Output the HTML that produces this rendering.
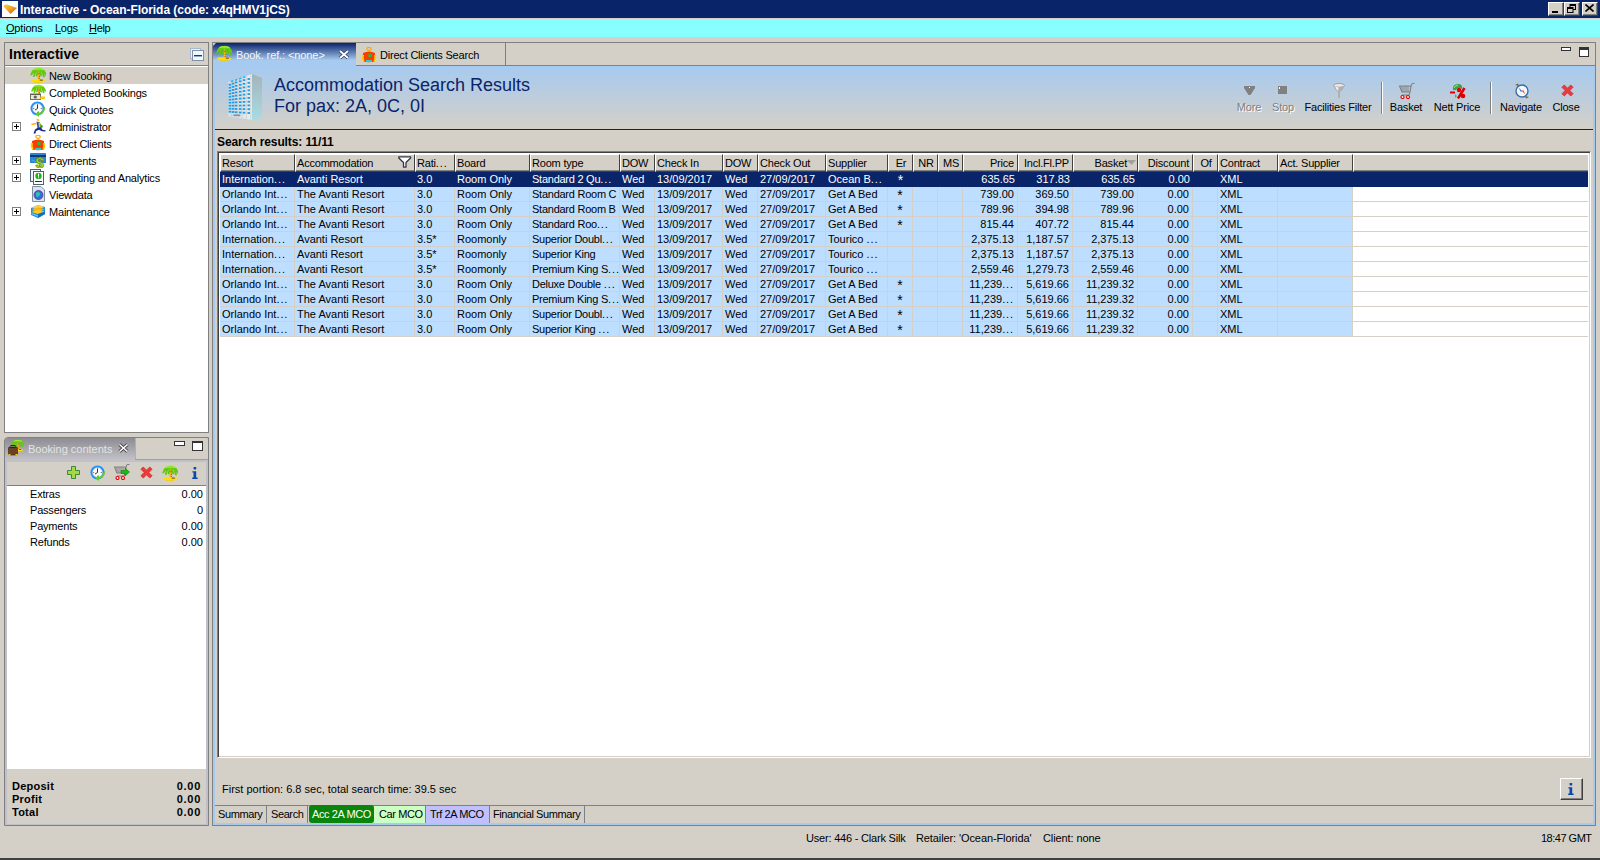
<!DOCTYPE html><html><head><meta charset="utf-8"><style>
*{box-sizing:border-box;margin:0;padding:0}
html,body{width:1600px;height:860px;overflow:hidden}
body{position:relative;background:#d4d0c8;font-family:"Liberation Sans",sans-serif;font-size:11px;color:#000;line-height:15px}
.a{position:absolute}
.t{position:absolute;white-space:nowrap}
.u{text-decoration:underline}
.wbtn{position:absolute;top:2px;width:16px;height:14px;background:#d4d0c8;border-top:1px solid #fff;border-left:1px solid #fff;border-right:1px solid #404040;border-bottom:1px solid #404040;box-shadow:inset -1px -1px 0 #808080}
.hc{position:absolute;top:154px;height:18px;background:#d4d0c8;border-top:1px solid #fff;border-left:1px solid #fff;border-right:1px solid #404040;border-bottom:1px solid #404040;box-shadow:inset 0 -1px 0 #808080;padding:1px 0 0 1px;line-height:15px;letter-spacing:-0.2px;white-space:nowrap;overflow:hidden}
.row{position:absolute;left:220px;width:1368px;height:15px;background:#fff;border-bottom:1px solid #d4d0c8}
.c{position:absolute;top:0;height:15px;white-space:nowrap;overflow:hidden;padding:0 2px;line-height:15px}
.cb{background:#bddeff;border-right:1px solid #d4d0c8;height:14px}
.sel .c{color:#fff}
.sel{background:#0a246a;border-bottom:none}
.sel .cb{background:transparent;border-right:none;height:15px}
.r{text-align:right;padding:0 3px 0 2px}
.ce{text-align:center}
</style></head><body>
<div class="a" style="left:0;top:0;width:1600px;height:18px;background:#0a246a"></div>
<div class="a" style="left:2px;top:1px;width:16px;height:16px;background:#fff"></div>
<div class="t" style="left:20px;top:2px;font-weight:bold;font-size:12px;color:#fff;line-height:16px;letter-spacing:-0.05px">Interactive - Ocean-Florida (code: x4qHMV1jCS)</div>
<svg class="a" style="left:2px;top:3px" width="16" height="12" viewBox="0 0 16 12"><defs><linearGradient id="ai" x1="0" y1="0" x2="1" y2="1"><stop offset="0" stop-color="#ffd040"/><stop offset="0.5" stop-color="#f0a020"/><stop offset="1" stop-color="#c84810"/></linearGradient></defs><path d="M1.5 3.5 Q2 1 5 1.5 L15 5 L8.5 11 Z" fill="url(#ai)"/></svg>
<div class="wbtn" style="left:1548px"></div>
<div class="wbtn" style="left:1564px"></div>
<div class="wbtn" style="left:1582px"></div>
<div class="a" style="left:1552px;top:11px;width:6px;height:2px;background:#000"></div>
<svg class="a" style="left:1567px;top:4px" width="9" height="9" viewBox="0 0 9 9"><rect x="3" y="0.5" width="5.5" height="5" fill="none" stroke="#000"/><rect x="3" y="0" width="6" height="2" fill="#000"/><rect x="0.5" y="3.5" width="5.5" height="5" fill="#d4d0c8" stroke="#000"/><rect x="0" y="3" width="6" height="2" fill="#000"/></svg>
<svg class="a" style="left:1585px;top:4px" width="9" height="8" viewBox="0 0 9 8"><path d="M0.5 0.5 L8.5 7.5 M8.5 0.5 L0.5 7.5" stroke="#000" stroke-width="1.6"/></svg>
<div class="a" style="left:0;top:19px;width:1600px;height:18px;background:#88ffff"></div>
<div class="t" style="left:6px;top:21px;letter-spacing:-0.2px"><span class="u">O</span>ptions</div>
<div class="t" style="left:55px;top:21px;letter-spacing:-0.3px"><span class="u">L</span>ogs</div>
<div class="t" style="left:89px;top:21px;letter-spacing:-0.3px"><span class="u">H</span>elp</div>
<div class="a" style="left:4px;top:42px;width:205px;height:391px;border:1px solid #808080;background:#fff"></div>
<div class="a" style="left:5px;top:43px;width:203px;height:22px;background:#d4d0c8"></div>
<div class="a" style="left:5px;top:65px;width:203px;height:1px;background:#808080"></div>
<div class="t" style="left:9px;top:46px;font-weight:bold;font-size:14px;line-height:16px">Interactive</div>
<div class="a" style="left:5px;top:67px;width:203px;height:17px;background:#d4d0c8"></div>
<svg class="a" style="left:190px;top:48px" width="14" height="13" viewBox="0 0 14 13"><rect x="0.5" y="0.5" width="10" height="10" fill="#e8f4ff" stroke="#a8b8d0"/><rect x="2.5" y="2.5" width="11" height="10" fill="#f0f8ff" stroke="#8090a8"/><rect x="4" y="7" width="8" height="1.4" fill="#10407a"/></svg>
<div class="t" style="left:49px;top:69px;letter-spacing:-0.2px">New Booking</div>
<svg class="a" style="left:30px;top:67px" width="16" height="16" viewBox="0 0 16 16"><path d="M7.6 3.5 Q9.8 8 8.8 13" stroke="#f2b418" stroke-width="2.4" fill="none"/><path d="M8.6 6.2 l1 0.8 M9.2 9 l0.6 0.7 M8.9 11.4 l0.7 0.6" stroke="#b04a10" stroke-width="1.2" fill="none"/><path d="M0.5 14 Q1 12.4 4 12.2 L12 12.2 Q15.2 12.6 15 14 Q14 15.9 8 15.7 Q2 15.9 0.5 14Z" fill="#ffde00"/><path d="M3 15 Q8 15.8 13 15 Q12 15.9 8 15.8 Q4 15.9 3 15Z" fill="#e8b800"/><path d="M9.8 12.6 h3 v1 h-3z" fill="#5a3a10"/><path d="M0.8 6.2 Q2.5 1 8.5 0.8 Q14.5 1 16 6.8 Q12.5 4 8.5 4 Q4.5 4 0.8 6.2Z" fill="#6ed214"/><path d="M4 4 L1.2 7.5 M5.5 4.2 L3.8 9 M7.6 4.5 L6.6 8.5 M10 4.4 L11.2 8.4 M12.2 4.2 L14 9.4 M13.6 3.8 L15.8 7.6" stroke="#62c810" stroke-width="1.9" stroke-linecap="round" fill="none"/><path d="M3.5 2.6 Q6 1.5 8.5 2.2 Q11 1.5 13.5 2.8" stroke="#a4ee3c" stroke-width="1.2" fill="none"/></svg>
<div class="t" style="left:49px;top:86px;letter-spacing:-0.2px">Completed Bookings</div>
<svg class="a" style="left:30px;top:84px" width="16" height="16" viewBox="0 0 16 16"><g transform="translate(1,0) scale(0.9)"><path d="M7.6 3.5 Q9.8 8 8.8 13" stroke="#f2b418" stroke-width="2.4" fill="none"/><path d="M8.6 6.2 l1 0.8 M9.2 9 l0.6 0.7 M8.9 11.4 l0.7 0.6" stroke="#b04a10" stroke-width="1.2" fill="none"/><path d="M0.8 6.2 Q2.5 1 8.5 0.8 Q14.5 1 16 6.8 Q12.5 4 8.5 4 Q4.5 4 0.8 6.2Z" fill="#6ed214"/><path d="M4 4 L1.2 7.5 M5.5 4.2 L3.8 9 M7.6 4.5 L6.6 8.5 M10 4.4 L11.2 8.4 M12.2 4.2 L14 9.4 M13.6 3.8 L15.8 7.6" stroke="#62c810" stroke-width="1.9" stroke-linecap="round" fill="none"/><path d="M3.5 2.6 Q6 1.5 8.5 2.2 Q11 1.5 13.5 2.8" stroke="#a4ee3c" stroke-width="1.2" fill="none"/></g><rect x="0.5" y="10" width="10" height="5.5" fill="#e8e8d8" stroke="#707060"/><rect x="0.5" y="10" width="10" height="1" fill="#606050"/><circle cx="5.3" cy="13" r="1.6" fill="#606060"/><path d="M10.5 12.5 h4.5 v2.5 h-5z" fill="#ffc800"/></svg>
<div class="t" style="left:49px;top:103px;letter-spacing:-0.2px">Quick Quotes</div>
<svg class="a" style="left:30px;top:101px" width="16" height="16" viewBox="0 0 16 16"><circle cx="7.5" cy="7.5" r="7" fill="#1e90ff"/><circle cx="7.5" cy="7.5" r="5" fill="#fafafa" stroke="#a0b0c0" stroke-width="0.6"/><path d="M7.5 3.2 v1 M7.5 10.8 v1 M3.2 7.5 h1 M10.8 7.5 h1" stroke="#404040" stroke-width="0.8"/><path d="M7.5 4 V7.5 L5 9" stroke="#333" stroke-width="1" fill="none"/><path d="M15 6 Q15.5 12 9 14 L9 16 L5.5 13 L9 10 L9 12 Q13 11 14 6Z" fill="#66cc22"/></svg>
<div class="t" style="left:49px;top:120px;letter-spacing:-0.2px">Administrator</div>
<svg class="a" style="left:30px;top:118px" width="16" height="16" viewBox="0 0 16 16"><path d="M6 1 L8.5 0.8 L9.5 2.5 L8 3.5Z" fill="#ffc020"/><path d="M6.5 3.5 L10 4.5 L10.5 9.5 L7.5 10Z" fill="#3050b0"/><path d="M8.5 4.5 L10.5 5 L11.5 9 L9 9.5Z" fill="#ffc020"/><path d="M10.5 6 L13 8 L11.5 11 L10 10Z" fill="#30a030"/><path d="M1.5 6.5 L6.5 5.5" stroke="#ffb000" stroke-width="1.4"/><path d="M8 9.5 L5 11.5 L4 14 L3.5 15.5 L5.5 15.5 L6 13 L9 11.8 L12 13.2 L15.5 13.5 L15.5 12.3 L12.5 11.8 L10.5 9.5Z" fill="#1a2a8a"/></svg>
<div class="a" style="left:12px;top:122px;width:9px;height:9px;border:1px solid #808080;background:#fff"></div>
<div class="a" style="left:14px;top:126px;width:5px;height:1px;background:#000"></div>
<div class="a" style="left:16px;top:124px;width:1px;height:5px;background:#000"></div>
<div class="t" style="left:49px;top:137px;letter-spacing:-0.2px">Direct Clients</div>
<svg class="a" style="left:30px;top:135px" width="16" height="16" viewBox="0 0 16 16"><ellipse cx="8" cy="1.8" rx="2.2" ry="1.5" fill="none" stroke="#ffaa00" stroke-width="1.2"/><path d="M2 6 Q8 3 14 6 L14 14.5 Q8 16 2 14.5Z" fill="#ff3a00"/><path d="M1 8 Q0 12 2.5 15 L3.5 14 Q2 11 3 8Z M15 8 Q16 12 13.5 15 L12.5 14 Q14 11 13 8Z" fill="#ffd000"/><rect x="7.5" y="7" width="3" height="3" fill="#20c040"/><rect x="5" y="13" width="6" height="2" fill="#20d0d0"/></svg>
<div class="t" style="left:49px;top:154px;letter-spacing:-0.2px">Payments</div>
<svg class="a" style="left:30px;top:152px" width="16" height="16" viewBox="0 0 16 16"><rect x="0" y="1" width="16" height="10" rx="0.5" fill="#2a86d8"/><rect x="0" y="3" width="16" height="2" fill="#0a3a70"/><path d="M2 8 L9 11" stroke="#60b0f0" stroke-width="0.8"/><text x="5.5" y="15.5" font-family="Liberation Sans" font-weight="bold" font-size="15" fill="#b8e020" stroke="#5a8a10" stroke-width="0.6">$</text></svg>
<div class="a" style="left:12px;top:156px;width:9px;height:9px;border:1px solid #808080;background:#fff"></div>
<div class="a" style="left:14px;top:160px;width:5px;height:1px;background:#000"></div>
<div class="a" style="left:16px;top:158px;width:1px;height:5px;background:#000"></div>
<div class="t" style="left:49px;top:171px;letter-spacing:-0.2px">Reporting and Analytics</div>
<svg class="a" style="left:30px;top:169px" width="16" height="16" viewBox="0 0 16 16"><rect x="0.5" y="0.5" width="10" height="12" fill="#f0f4f8" stroke="#506070"/><rect x="3.5" y="2.5" width="10" height="13" fill="#fff" stroke="#506070"/><circle cx="8.5" cy="7" r="3.2" fill="#20b020"/><rect x="8" y="4.6" width="1" height="3" fill="#fff"/><rect x="8" y="8.3" width="1" height="1" fill="#fff"/><rect x="5" y="12" width="7" height="1" fill="#303030"/></svg>
<div class="a" style="left:12px;top:173px;width:9px;height:9px;border:1px solid #808080;background:#fff"></div>
<div class="a" style="left:14px;top:177px;width:5px;height:1px;background:#000"></div>
<div class="a" style="left:16px;top:175px;width:1px;height:5px;background:#000"></div>
<div class="t" style="left:49px;top:188px;letter-spacing:-0.2px">Viewdata</div>
<svg class="a" style="left:30px;top:186px" width="16" height="16" viewBox="0 0 16 16"><path d="M2.5 0.5 H11 L14.5 4 V15.5 H2.5Z" fill="#d8e4f0" stroke="#8090a0"/><circle cx="8.5" cy="9" r="4.5" fill="#3070d0"/><path d="M6 7 Q8 5 10 7 Q11 9 9 10 Q7 12 6 10Z" fill="#30c0b0"/><circle cx="8.5" cy="9" r="4.5" fill="none" stroke="#6030a0" stroke-width="0.8"/></svg>
<div class="t" style="left:49px;top:205px;letter-spacing:-0.2px">Maintenance</div>
<svg class="a" style="left:30px;top:203px" width="16" height="16" viewBox="0 0 16 16"><path d="M1 5 L8 2 L15 4 L15 11 L8 15 L1 12Z" fill="#2090e0"/><path d="M1.5 5 L8 2 L14.5 4 L8 6.5Z" fill="#ffd040"/><path d="M1.5 7 L8 4.2 L14.5 6.2 L8 9Z" fill="#ffb000"/><path d="M1.5 9 L8 6.4 L14.5 8.4 L8 11Z" fill="#ffc828"/><path d="M8 11 L15 8.5 L15 11 L8 15Z" fill="#1070c0"/><path d="M1.5 10 L8 12.5 L8 13.5 L1.5 11Z" fill="#70d8ff"/></svg>
<div class="a" style="left:12px;top:207px;width:9px;height:9px;border:1px solid #808080;background:#fff"></div>
<div class="a" style="left:14px;top:211px;width:5px;height:1px;background:#000"></div>
<div class="a" style="left:16px;top:209px;width:1px;height:5px;background:#000"></div>
<div class="a" style="left:4px;top:437px;width:205px;height:389px;border:1px solid #808080;border-top-left-radius:4px;background:#c0c0c8"></div>
<div class="a" style="left:5px;top:438px;width:130px;height:23px;border-top-left-radius:3px;background:linear-gradient(#8c8c92,#c4c4ca)"></div>
<div class="a" style="left:135px;top:438px;width:73px;height:21px;background:#d4d0c8;border-left:1px solid #b0b0b0;border-top-right-radius:4px"></div>
<div class="a" style="left:135px;top:459px;width:73px;height:1px;background:#a0a0a0"></div>
<svg class="a" style="left:8px;top:440px" width="16" height="16" viewBox="0 0 16 16"><g transform="translate(3,-1) scale(0.8)"><path d="M7.6 3.5 Q9.8 8 8.8 13" stroke="#f2b418" stroke-width="2.4" fill="none"/><path d="M8.6 6.2 l1 0.8 M9.2 9 l0.6 0.7 M8.9 11.4 l0.7 0.6" stroke="#b04a10" stroke-width="1.2" fill="none"/><path d="M0.5 14 Q1 12.4 4 12.2 L12 12.2 Q15.2 12.6 15 14 Q14 15.9 8 15.7 Q2 15.9 0.5 14Z" fill="#ffde00"/><path d="M3 15 Q8 15.8 13 15 Q12 15.9 8 15.8 Q4 15.9 3 15Z" fill="#e8b800"/><path d="M9.8 12.6 h3 v1 h-3z" fill="#5a3a10"/><path d="M0.8 6.2 Q2.5 1 8.5 0.8 Q14.5 1 16 6.8 Q12.5 4 8.5 4 Q4.5 4 0.8 6.2Z" fill="#6ed214"/><path d="M4 4 L1.2 7.5 M5.5 4.2 L3.8 9 M7.6 4.5 L6.6 8.5 M10 4.4 L11.2 8.4 M12.2 4.2 L14 9.4 M13.6 3.8 L15.8 7.6" stroke="#62c810" stroke-width="1.9" stroke-linecap="round" fill="none"/><path d="M3.5 2.6 Q6 1.5 8.5 2.2 Q11 1.5 13.5 2.8" stroke="#a4ee3c" stroke-width="1.2" fill="none"/></g><rect x="0.5" y="7" width="9" height="8" rx="1" fill="#6b4226" stroke="#3a2010" stroke-width="0.6"/><rect x="3" y="5.5" width="4" height="2" fill="none" stroke="#3a2010"/><rect x="0.5" y="14" width="2" height="1.5" fill="#ffd000"/><rect x="7.5" y="14" width="2" height="1.5" fill="#ffd000"/></svg>
<div class="t" style="left:28px;top:442px;color:#e4e4e4">Booking contents</div>
<svg class="a" style="left:118px;top:443px" width="11" height="10" viewBox="0 0 11 10"><path d="M1.5 1.5 L9.5 8.5 M9.5 1.5 L1.5 8.5" stroke="#404040" stroke-width="3.2"/><path d="M1.5 1.5 L9.5 8.5 M9.5 1.5 L1.5 8.5" stroke="#fff" stroke-width="1.6"/></svg>
<div class="a" style="left:174px;top:441px;width:11px;height:5px;border:1px solid #333;background:#fff"></div>
<div class="a" style="left:192px;top:441px;width:11px;height:10px;border:1px solid #333;border-top-width:2px;background:#fff"></div>
<div class="a" style="left:7px;top:462px;width:199px;height:24px;background:#d4d0c8;border-bottom:1px solid #808080"></div>
<svg class="a" style="left:66px;top:465px" width="16" height="16" viewBox="0 0 16 16"><path d="M5.5 1.5 H9.5 V5.5 H13.5 V9.5 H9.5 V13.5 H5.5 V9.5 H1.5 V5.5 H5.5Z" fill="#a8d840" stroke="#3a8a40" stroke-width="1"/></svg>
<svg class="a" style="left:90px;top:465px" width="16" height="16" viewBox="0 0 16 16"><circle cx="7.5" cy="7.5" r="7" fill="#1e90ff"/><circle cx="7.5" cy="7.5" r="5" fill="#fafafa" stroke="#a0b0c0" stroke-width="0.6"/><path d="M7.5 3.2 v1 M7.5 10.8 v1 M3.2 7.5 h1 M10.8 7.5 h1" stroke="#404040" stroke-width="0.8"/><path d="M7.5 4 V7.5 L5 9" stroke="#333" stroke-width="1" fill="none"/><path d="M15 6 Q15.5 12 9 14 L9 16 L5.5 13 L9 10 L9 12 Q13 11 14 6Z" fill="#66cc22"/></svg>
<svg class="a" style="left:114px;top:464px" width="16" height="16" viewBox="0 0 16 16"><path d="M0.5 3 H12 L11 9 H3 Z" fill="none" stroke="#808080" stroke-width="1.2"/><path d="M3 3 V9 M5 3 V9 M7 3 V9 M9 3 V9" stroke="#808080" stroke-width="1"/><path d="M12 3 L13 0.5 H15.5" stroke="#808080" stroke-width="1" fill="none"/><path d="M11 9 L10 12 H3" stroke="#808080" stroke-width="1" fill="none"/><circle cx="3.5" cy="14" r="1.5" fill="#fff" stroke="#ee0000" stroke-width="1.2"/><circle cx="9" cy="14" r="1.5" fill="#fff" stroke="#ee0000" stroke-width="1.2"/><path d="M7 6.5 H11 V4 L15.5 8 L11 12 V9.5 H7Z" fill="#10c010" stroke="#087008" stroke-width="0.5"/></svg>
<svg class="a" style="left:140px;top:466px" width="13" height="13" viewBox="0 0 14 14"><path d="M1 3.5 L3.5 1 L7 4.5 L10.5 1 L13 3.5 L9.5 7 L13 10.5 L10.5 13 L7 9.5 L3.5 13 L1 10.5 L4.5 7Z" fill="#ee3a3a" stroke="#c82020" stroke-width="0.7" stroke-linejoin="round"/></svg>
<svg class="a" style="left:162px;top:465px" width="16" height="16" viewBox="0 0 16 16"><path d="M7.6 3.5 Q9.8 8 8.8 13" stroke="#f2b418" stroke-width="2.4" fill="none"/><path d="M8.6 6.2 l1 0.8 M9.2 9 l0.6 0.7 M8.9 11.4 l0.7 0.6" stroke="#b04a10" stroke-width="1.2" fill="none"/><path d="M0.5 14 Q1 12.4 4 12.2 L12 12.2 Q15.2 12.6 15 14 Q14 15.9 8 15.7 Q2 15.9 0.5 14Z" fill="#ffde00"/><path d="M3 15 Q8 15.8 13 15 Q12 15.9 8 15.8 Q4 15.9 3 15Z" fill="#e8b800"/><path d="M9.8 12.6 h3 v1 h-3z" fill="#5a3a10"/><path d="M0.8 6.2 Q2.5 1 8.5 0.8 Q14.5 1 16 6.8 Q12.5 4 8.5 4 Q4.5 4 0.8 6.2Z" fill="#6ed214"/><path d="M4 4 L1.2 7.5 M5.5 4.2 L3.8 9 M7.6 4.5 L6.6 8.5 M10 4.4 L11.2 8.4 M12.2 4.2 L14 9.4 M13.6 3.8 L15.8 7.6" stroke="#62c810" stroke-width="1.9" stroke-linecap="round" fill="none"/><path d="M3.5 2.6 Q6 1.5 8.5 2.2 Q11 1.5 13.5 2.8" stroke="#a4ee3c" stroke-width="1.2" fill="none"/></svg>
<svg class="a" style="left:192px;top:467px" width="6" height="12" viewBox="0 0 6 12"><rect x="1.6" y="0" width="2.6" height="2.4" rx="0.6" fill="#0848a8"/><path d="M0.4 4.2 H4.2 V10.6 H5.6 V12 H0.2 V10.6 H1.5 V5.6 H0.4Z" fill="#0848a8"/></svg>
<div class="a" style="left:7px;top:486px;width:199px;height:283px;background:#fff"></div>
<div class="t" style="left:30px;top:487px;letter-spacing:-0.2px">Extras</div>
<div class="t" style="left:120px;width:83px;text-align:right;top:487px">0.00</div>
<div class="t" style="left:30px;top:503px;letter-spacing:-0.2px">Passengers</div>
<div class="t" style="left:120px;width:83px;text-align:right;top:503px">0</div>
<div class="t" style="left:30px;top:519px;letter-spacing:-0.2px">Payments</div>
<div class="t" style="left:120px;width:83px;text-align:right;top:519px">0.00</div>
<div class="t" style="left:30px;top:535px;letter-spacing:-0.2px">Refunds</div>
<div class="t" style="left:120px;width:83px;text-align:right;top:535px">0.00</div>
<div class="a" style="left:7px;top:769px;width:199px;height:55px;background:#d4d0c8"></div>
<div class="t" style="left:12px;top:779px;font-weight:bold;letter-spacing:0.25px">Deposit</div>
<div class="t" style="left:120px;width:81px;text-align:right;top:779px;font-weight:bold;letter-spacing:0.7px">0.00</div>
<div class="t" style="left:12px;top:792px;font-weight:bold;letter-spacing:0.25px">Profit</div>
<div class="t" style="left:120px;width:81px;text-align:right;top:792px;font-weight:bold;letter-spacing:0.7px">0.00</div>
<div class="t" style="left:12px;top:805px;font-weight:bold;letter-spacing:0.25px">Total</div>
<div class="t" style="left:120px;width:81px;text-align:right;top:805px;font-weight:bold;letter-spacing:0.7px">0.00</div>
<div class="a" style="left:212px;top:42px;width:1384px;height:784px;border:1px solid #808080;background:#d4d0c8"></div>
<div class="a" style="left:213px;top:66px;width:1382px;height:759px;border:2px solid #a6caf0;border-top:none"></div>
<div class="a" style="left:356px;top:65px;width:1239px;height:1px;background:#808080"></div>
<div class="a" style="left:213px;top:43px;width:143px;height:23px;background:linear-gradient(#0a246a,#a6caf0 75%,#a6caf0);clip-path:polygon(3px 0,100% 0,100% 100%,0 100%,0 3px)"></div>
<div class="t" style="left:236px;top:48px;color:#f4f6fa;letter-spacing:-0.1px">Book. ref.: &lt;none&gt;</div>
<svg class="a" style="left:216px;top:45px" width="16" height="16" viewBox="0 0 16 16"><path d="M7.6 3.5 Q9.8 8 8.8 13" stroke="#f2b418" stroke-width="2.4" fill="none"/><path d="M8.6 6.2 l1 0.8 M9.2 9 l0.6 0.7 M8.9 11.4 l0.7 0.6" stroke="#b04a10" stroke-width="1.2" fill="none"/><path d="M0.5 14 Q1 12.4 4 12.2 L12 12.2 Q15.2 12.6 15 14 Q14 15.9 8 15.7 Q2 15.9 0.5 14Z" fill="#ffde00"/><path d="M3 15 Q8 15.8 13 15 Q12 15.9 8 15.8 Q4 15.9 3 15Z" fill="#e8b800"/><path d="M9.8 12.6 h3 v1 h-3z" fill="#5a3a10"/><path d="M0.8 6.2 Q2.5 1 8.5 0.8 Q14.5 1 16 6.8 Q12.5 4 8.5 4 Q4.5 4 0.8 6.2Z" fill="#6ed214"/><path d="M4 4 L1.2 7.5 M5.5 4.2 L3.8 9 M7.6 4.5 L6.6 8.5 M10 4.4 L11.2 8.4 M12.2 4.2 L14 9.4 M13.6 3.8 L15.8 7.6" stroke="#62c810" stroke-width="1.9" stroke-linecap="round" fill="none"/><path d="M3.5 2.6 Q6 1.5 8.5 2.2 Q11 1.5 13.5 2.8" stroke="#a4ee3c" stroke-width="1.2" fill="none"/></svg>
<svg class="a" style="left:338px;top:49px" width="12" height="11" viewBox="0 0 12 11"><path d="M2 2 L10 9 M10 2 L2 9" stroke="#303a60" stroke-width="3.4"/><path d="M2 2 L10 9 M10 2 L2 9" stroke="#fff" stroke-width="1.8"/></svg>
<svg class="a" style="left:361px;top:47px" width="16" height="16" viewBox="0 0 16 16"><ellipse cx="8" cy="1.8" rx="2.2" ry="1.5" fill="none" stroke="#ffaa00" stroke-width="1.2"/><path d="M2 6 Q8 3 14 6 L14 14.5 Q8 16 2 14.5Z" fill="#ff3a00"/><path d="M1 8 Q0 12 2.5 15 L3.5 14 Q2 11 3 8Z M15 8 Q16 12 13.5 15 L12.5 14 Q14 11 13 8Z" fill="#ffd000"/><rect x="7.5" y="7" width="3" height="3" fill="#20c040"/><rect x="5" y="13" width="6" height="2" fill="#20d0d0"/></svg>
<div class="a" style="left:1561px;top:47px;width:10px;height:4px;border:1px solid #333;background:#fff"></div>
<div class="a" style="left:1579px;top:47px;width:10px;height:10px;border:1px solid #333;border-top-width:3px;background:#fff"></div>
<div class="a" style="left:505px;top:43px;width:1px;height:22px;background:#808080"></div>
<div class="t" style="left:380px;top:48px;letter-spacing:-0.2px">Direct Clients Search</div>
<div class="a" style="left:215px;top:66px;width:1378px;height:63px;background:linear-gradient(#a6caf0,#d4d0c8)"></div>
<div class="a" style="left:215px;top:129px;width:1378px;height:1px;background:#0a246a"></div>
<svg class="a" style="left:228px;top:74px" width="35" height="47" viewBox="0 0 35 47"><defs><linearGradient id="bs" x1="0" y1="0" x2="0" y2="1"><stop offset="0" stop-color="#a4b4b8"/><stop offset="1" stop-color="#a8dce4"/></linearGradient><linearGradient id="bf" x1="0" y1="0" x2="1" y2="0"><stop offset="0" stop-color="#d4dce0"/><stop offset="1" stop-color="#e8eef0"/></linearGradient></defs><path d="M24 0 L34 4 L34 43.5 L24 46Z" fill="url(#bs)"/><path d="M0 8 L24 0 L24 46 L0 42.5Z" fill="url(#bf)"/><path d="M3.6 6.8 V43.0" stroke="#c4ccd0" stroke-width="0.7"/><path d="M6.8 5.8 V43.5" stroke="#c4ccd0" stroke-width="0.7"/><path d="M10.2 4.6 V44.0" stroke="#c4ccd0" stroke-width="0.7"/><path d="M14.1 3.3 V44.5" stroke="#c4ccd0" stroke-width="0.7"/><path d="M18.4 1.9 V45.2" stroke="#c4ccd0" stroke-width="0.7"/><path d="M22.8 0.5 V45.8" stroke="#c4ccd0" stroke-width="0.7"/><rect x="0.6" y="9.8" width="2.5" height="1.8" fill="#1e9ae8"/><rect x="0.6" y="12.8" width="2.5" height="1.8" fill="#1e9ae8"/><rect x="0.6" y="15.8" width="2.5" height="1.8" fill="#1e9ae8"/><rect x="0.6" y="18.8" width="2.5" height="1.8" fill="#1e9ae8"/><rect x="0.6" y="21.8" width="2.5" height="1.8" fill="#1e9ae8"/><rect x="0.6" y="24.8" width="2.5" height="1.8" fill="#1e9ae8"/><rect x="0.6" y="27.8" width="2.5" height="1.8" fill="#1e9ae8"/><rect x="0.6" y="30.8" width="2.5" height="1.8" fill="#1e9ae8"/><rect x="0.6" y="33.8" width="2.5" height="1.8" fill="#1e9ae8"/><rect x="0.6" y="36.8" width="2.5" height="1.8" fill="#1e9ae8"/><rect x="3.8" y="8.7" width="2.5" height="1.8" fill="#1e9ae8"/><rect x="3.8" y="11.9" width="2.5" height="1.8" fill="#1e9ae8"/><rect x="3.8" y="15.0" width="2.5" height="1.8" fill="#1e9ae8"/><rect x="3.8" y="18.2" width="2.5" height="1.8" fill="#1e9ae8"/><rect x="3.8" y="21.3" width="2.5" height="1.8" fill="#1e9ae8"/><rect x="3.8" y="24.5" width="2.5" height="1.8" fill="#1e9ae8"/><rect x="3.8" y="27.6" width="2.5" height="1.8" fill="#1e9ae8"/><rect x="3.8" y="30.8" width="2.5" height="1.8" fill="#1e9ae8"/><rect x="3.8" y="33.9" width="2.5" height="1.8" fill="#1e9ae8"/><rect x="3.8" y="37.1" width="2.5" height="1.8" fill="#1e9ae8"/><rect x="6.9" y="7.5" width="2.5" height="1.8" fill="#1e9ae8"/><rect x="6.9" y="10.9" width="2.5" height="1.8" fill="#1e9ae8"/><rect x="6.9" y="14.2" width="2.5" height="1.8" fill="#1e9ae8"/><rect x="6.9" y="17.5" width="2.5" height="1.8" fill="#1e9ae8"/><rect x="6.9" y="20.8" width="2.5" height="1.8" fill="#1e9ae8"/><rect x="6.9" y="24.1" width="2.5" height="1.8" fill="#1e9ae8"/><rect x="6.9" y="27.4" width="2.5" height="1.8" fill="#1e9ae8"/><rect x="6.9" y="30.7" width="2.5" height="1.8" fill="#1e9ae8"/><rect x="6.9" y="34.0" width="2.5" height="1.8" fill="#1e9ae8"/><rect x="6.9" y="37.3" width="2.5" height="1.8" fill="#1e9ae8"/><rect x="11.0" y="6.4" width="2.5" height="1.8" fill="#1e9ae8"/><rect x="11.0" y="9.9" width="2.5" height="1.8" fill="#1e9ae8"/><rect x="11.0" y="13.3" width="2.5" height="1.8" fill="#1e9ae8"/><rect x="11.0" y="16.8" width="2.5" height="1.8" fill="#1e9ae8"/><rect x="11.0" y="20.3" width="2.5" height="1.8" fill="#1e9ae8"/><rect x="11.0" y="23.7" width="2.5" height="1.8" fill="#1e9ae8"/><rect x="11.0" y="27.2" width="2.5" height="1.8" fill="#1e9ae8"/><rect x="11.0" y="30.7" width="2.5" height="1.8" fill="#1e9ae8"/><rect x="11.0" y="34.1" width="2.5" height="1.8" fill="#1e9ae8"/><rect x="11.0" y="37.6" width="2.5" height="1.8" fill="#1e9ae8"/><rect x="14.8" y="5.2" width="2.5" height="1.8" fill="#1e9ae8"/><rect x="14.8" y="8.9" width="2.5" height="1.8" fill="#1e9ae8"/><rect x="14.8" y="12.5" width="2.5" height="1.8" fill="#1e9ae8"/><rect x="14.8" y="16.1" width="2.5" height="1.8" fill="#1e9ae8"/><rect x="14.8" y="19.7" width="2.5" height="1.8" fill="#1e9ae8"/><rect x="14.8" y="23.4" width="2.5" height="1.8" fill="#1e9ae8"/><rect x="14.8" y="27.0" width="2.5" height="1.8" fill="#1e9ae8"/><rect x="14.8" y="30.6" width="2.5" height="1.8" fill="#1e9ae8"/><rect x="14.8" y="34.2" width="2.5" height="1.8" fill="#1e9ae8"/><rect x="14.8" y="37.8" width="2.5" height="1.8" fill="#1e9ae8"/><rect x="19.5" y="4.1" width="2.5" height="1.8" fill="#1e9ae8"/><rect x="19.5" y="7.9" width="2.5" height="1.8" fill="#1e9ae8"/><rect x="19.5" y="11.7" width="2.5" height="1.8" fill="#1e9ae8"/><rect x="19.5" y="15.4" width="2.5" height="1.8" fill="#1e9ae8"/><rect x="19.5" y="19.2" width="2.5" height="1.8" fill="#1e9ae8"/><rect x="19.5" y="23.0" width="2.5" height="1.8" fill="#1e9ae8"/><rect x="19.5" y="26.8" width="2.5" height="1.8" fill="#1e9ae8"/><rect x="19.5" y="30.5" width="2.5" height="1.8" fill="#1e9ae8"/><rect x="19.5" y="34.3" width="2.5" height="1.8" fill="#1e9ae8"/><rect x="19.5" y="38.1" width="2.5" height="1.8" fill="#1e9ae8"/><path d="M3 7.5 L5.5 6.7 M7 6.2 L9.5 5.4 M11 4.9 L13.5 4.1 M15 3.6 L17.5 2.8" stroke="#20b4f4" stroke-width="1.6"/><path d="M5 40.8 Q9 39.8 12.5 40.8 L12 42.3 L5.5 42Z" fill="#8a9298"/></svg>
<div class="t" style="left:274px;top:75px;font-size:18px;line-height:21px;color:#0a246a">Accommodation Search Results</div>
<div class="t" style="left:274px;top:96px;font-size:18px;line-height:21px;color:#0a246a">For pax: 2A, 0C, 0I</div>
<div class="t" style="left:1189px;width:120px;text-align:center;top:100px;color:#808080;text-shadow:1px 1px 0 #fff;letter-spacing:-0.2px">More</div>
<div class="t" style="left:1223px;width:120px;text-align:center;top:100px;color:#808080;text-shadow:1px 1px 0 #fff;letter-spacing:-0.2px">Stop</div>
<div class="t" style="left:1278px;width:120px;text-align:center;top:100px;color:#000;letter-spacing:-0.2px">Facilities Filter</div>
<div class="t" style="left:1346px;width:120px;text-align:center;top:100px;color:#000;letter-spacing:-0.2px">Basket</div>
<div class="t" style="left:1397px;width:120px;text-align:center;top:100px;color:#000;letter-spacing:-0.2px">Nett Price</div>
<div class="t" style="left:1461px;width:120px;text-align:center;top:100px;color:#000;letter-spacing:-0.2px">Navigate</div>
<div class="t" style="left:1506px;width:120px;text-align:center;top:100px;color:#000;letter-spacing:-0.2px">Close</div>
<svg class="a" style="left:1244px;top:86px" width="11" height="9" viewBox="0 0 11 9"><path d="M0 0 H11 V2 L6.5 9 H4.5 L0 2Z" fill="#808080"/><rect x="5" y="1" width="1" height="1" fill="#fff"/></svg>
<svg class="a" style="left:1278px;top:86px" width="9" height="8" viewBox="0 0 9 8"><rect x="0" y="0" width="9" height="8" fill="#808080"/><rect x="1" y="1" width="1" height="2" fill="#fff"/></svg>
<svg class="a" style="left:1333px;top:83px" width="12" height="16" viewBox="0 0 12 16"><ellipse cx="6" cy="2.5" rx="5.5" ry="2" fill="#e8e8e8" stroke="#909090" stroke-width="0.8"/><path d="M0.5 2.5 Q1 6 5 9 V15 H7 V9 Q11 6 11.5 2.5 Q6 5 0.5 2.5Z" fill="#b0b0b0"/><path d="M2 3.5 Q3 6 5 8 L5.5 4.5Z" fill="#f0f0f0"/></svg>
<svg class="a" style="left:1399px;top:83px" width="16" height="16" viewBox="0 0 16 16"><path d="M0.5 3 H12 L11 9 H3 Z" fill="none" stroke="#808080" stroke-width="1.2"/><path d="M3 3 V9 M5 3 V9 M7 3 V9 M9 3 V9" stroke="#808080" stroke-width="1"/><path d="M12 3 L13 0.5 H15.5" stroke="#808080" stroke-width="1" fill="none"/><path d="M11 9 L10 12 H3" stroke="#808080" stroke-width="1" fill="none"/><circle cx="3.5" cy="14" r="1.5" fill="#fff" stroke="#ee0000" stroke-width="1.2"/><circle cx="9" cy="14" r="1.5" fill="#fff" stroke="#ee0000" stroke-width="1.2"/></svg>
<svg class="a" style="left:1450px;top:83px" width="16" height="16" viewBox="0 0 16 16"><path d="M3 7 Q2 1 8 1 Q13 1 12 6 Q8 3 6 7Z" fill="#40a040"/><path d="M4 5 Q5 2 8 2.5" stroke="#a0e080" stroke-width="1" fill="none"/><rect x="0" y="8.5" width="5" height="2" fill="#e00000"/><circle cx="9" cy="7" r="2.2" fill="#e00000"/><circle cx="13" cy="13" r="2.3" fill="#e00000"/><path d="M14.5 5 L8 15.5" stroke="#e00000" stroke-width="2.6"/><path d="M5 11 L7 13 L5 15Z" fill="#40c040"/></svg>
<svg class="a" style="left:1514px;top:83px" width="16" height="16" viewBox="0 0 16 16"><path d="M1 2 L4 0.5 L5 3 Z" fill="#8b5a2b"/><path d="M15 14 L12 15.5 L11 13Z" fill="#8b5a2b"/><circle cx="8" cy="8" r="6" fill="#f4f8fc" stroke="#3a6ea8" stroke-width="1.4"/><path d="M4.5 4.5 L8 8 L7 9Z" fill="#2060d0"/><path d="M11.5 11.5 L8 8 L9 7Z" fill="#e02020"/></svg>
<svg class="a" style="left:1561px;top:84px" width="13" height="13" viewBox="0 0 14 14"><path d="M1 3.5 L3.5 1 L7 4.5 L10.5 1 L13 3.5 L9.5 7 L13 10.5 L10.5 13 L7 9.5 L3.5 13 L1 10.5 L4.5 7Z" fill="#ee3a3a" stroke="#c82020" stroke-width="0.7" stroke-linejoin="round"/></svg>
<div class="a" style="left:1381px;top:82px;width:1px;height:32px;background:#808080;box-shadow:1px 0 0 #fff"></div>
<div class="a" style="left:1490px;top:82px;width:1px;height:32px;background:#808080;box-shadow:1px 0 0 #fff"></div>
<div class="t" style="left:217px;top:135px;font-weight:bold;font-size:12px;letter-spacing:-0.1px">Search results: 11/11</div>
<div class="a" style="left:217px;top:151px;width:1374px;height:607px;border-top:1px solid #808080;border-left:1px solid #808080;border-right:1px solid #fff;border-bottom:1px solid #fff;background:#fff;box-shadow:inset 1px 1px 0 #404040,inset -1px -1px 0 #d4d0c8"></div>
<div class="hc" style="left:220px;width:75px;">Resort</div>
<div class="hc" style="left:295px;width:120px;">Accommodation</div>
<div class="hc" style="left:415px;width:40px;">Rati<span style="letter-spacing:0.9px">...</span></div>
<div class="hc" style="left:455px;width:75px;">Board</div>
<div class="hc" style="left:530px;width:90px;">Room type</div>
<div class="hc" style="left:620px;width:35px;">DOW</div>
<div class="hc" style="left:655px;width:68px;">Check In</div>
<div class="hc" style="left:723px;width:35px;">DOW</div>
<div class="hc" style="left:758px;width:68px;">Check Out</div>
<div class="hc" style="left:826px;width:62px;">Supplier</div>
<div class="hc" style="left:888px;width:25px;text-align:center;">Er</div>
<div class="hc" style="left:913px;width:25px;text-align:center;">NR</div>
<div class="hc" style="left:938px;width:25px;text-align:center;">MS</div>
<div class="hc" style="left:963px;width:55px;text-align:right;padding-right:3px;">Price</div>
<div class="hc" style="left:1018px;width:55px;text-align:right;padding-right:3px;">Incl.Fl.PP</div>
<div class="hc" style="left:1073px;width:65px;text-align:right;padding-right:10px;">Basket</div>
<div class="hc" style="left:1138px;width:55px;text-align:right;padding-right:3px;">Discount</div>
<div class="hc" style="left:1193px;width:25px;text-align:center;">Of</div>
<div class="hc" style="left:1218px;width:60px;">Contract</div>
<div class="hc" style="left:1278px;width:75px;">Act. Supplier</div>
<div class="hc" style="left:1353px;width:235px;border-right:none"></div>
<svg class="a" style="left:398px;top:156px" width="14" height="12" viewBox="0 0 14 12"><path d="M0.8 0.8 H12.6 V2 L8 6.5 V11 L5.5 11.2 V6.5 L0.8 2Z" fill="#fff" stroke="#303848" stroke-width="1.3" stroke-linejoin="round"/></svg>
<svg class="a" style="left:1127px;top:160px" width="9" height="5" viewBox="0 0 9 5"><path d="M0 0 H9 L4.5 5Z" fill="#a0a0a0"/></svg>
<div class="row sel" style="top:172px">
<div class="c cb" style="left:0px;width:75px">Internation<span style="letter-spacing:0.9px">...</span></div>
<div class="c cb" style="left:75px;width:120px">Avanti Resort</div>
<div class="c cb" style="left:195px;width:40px">3.0</div>
<div class="c cb" style="left:235px;width:75px">Room Only</div>
<div class="c cb" style="left:310px;width:90px;letter-spacing:-0.25px">Standard 2 Qu<span style="letter-spacing:0.9px">...</span></div>
<div class="c cb" style="left:400px;width:35px">Wed</div>
<div class="c cb" style="left:435px;width:68px">13/09/2017</div>
<div class="c cb" style="left:503px;width:35px">Wed</div>
<div class="c cb" style="left:538px;width:68px">27/09/2017</div>
<div class="c cb" style="left:606px;width:62px">Ocean B<span style="letter-spacing:0.9px">...</span></div>
<div class="c cb ce" style="left:668px;width:25px"><span style="font-size:14px;position:relative;top:1px">*</span></div>
<div class="c cb ce" style="left:693px;width:25px"></div>
<div class="c cb ce" style="left:718px;width:25px"></div>
<div class="c cb r" style="left:743px;width:55px">635.65</div>
<div class="c cb r" style="left:798px;width:55px">317.83</div>
<div class="c cb r" style="left:853px;width:65px">635.65</div>
<div class="c cb r" style="left:918px;width:55px">0.00</div>
<div class="c cb ce" style="left:973px;width:25px"></div>
<div class="c cb" style="left:998px;width:60px">XML</div>
<div class="c cb" style="left:1058px;width:75px"></div>
</div>
<div class="row" style="top:187px">
<div class="c cb" style="left:0px;width:75px">Orlando Int<span style="letter-spacing:0.9px">...</span></div>
<div class="c cb" style="left:75px;width:120px">The Avanti Resort</div>
<div class="c cb" style="left:195px;width:40px">3.0</div>
<div class="c cb" style="left:235px;width:75px">Room Only</div>
<div class="c cb" style="left:310px;width:90px;letter-spacing:-0.25px">Standard Room C</div>
<div class="c cb" style="left:400px;width:35px">Wed</div>
<div class="c cb" style="left:435px;width:68px">13/09/2017</div>
<div class="c cb" style="left:503px;width:35px">Wed</div>
<div class="c cb" style="left:538px;width:68px">27/09/2017</div>
<div class="c cb" style="left:606px;width:62px">Get A Bed</div>
<div class="c cb ce" style="left:668px;width:25px"><span style="font-size:14px;position:relative;top:1px">*</span></div>
<div class="c cb ce" style="left:693px;width:25px"></div>
<div class="c cb ce" style="left:718px;width:25px"></div>
<div class="c cb r" style="left:743px;width:55px">739.00</div>
<div class="c cb r" style="left:798px;width:55px">369.50</div>
<div class="c cb r" style="left:853px;width:65px">739.00</div>
<div class="c cb r" style="left:918px;width:55px">0.00</div>
<div class="c cb ce" style="left:973px;width:25px"></div>
<div class="c cb" style="left:998px;width:60px">XML</div>
<div class="c cb" style="left:1058px;width:75px"></div>
</div>
<div class="row" style="top:202px">
<div class="c cb" style="left:0px;width:75px">Orlando Int<span style="letter-spacing:0.9px">...</span></div>
<div class="c cb" style="left:75px;width:120px">The Avanti Resort</div>
<div class="c cb" style="left:195px;width:40px">3.0</div>
<div class="c cb" style="left:235px;width:75px">Room Only</div>
<div class="c cb" style="left:310px;width:90px;letter-spacing:-0.25px">Standard Room B</div>
<div class="c cb" style="left:400px;width:35px">Wed</div>
<div class="c cb" style="left:435px;width:68px">13/09/2017</div>
<div class="c cb" style="left:503px;width:35px">Wed</div>
<div class="c cb" style="left:538px;width:68px">27/09/2017</div>
<div class="c cb" style="left:606px;width:62px">Get A Bed</div>
<div class="c cb ce" style="left:668px;width:25px"><span style="font-size:14px;position:relative;top:1px">*</span></div>
<div class="c cb ce" style="left:693px;width:25px"></div>
<div class="c cb ce" style="left:718px;width:25px"></div>
<div class="c cb r" style="left:743px;width:55px">789.96</div>
<div class="c cb r" style="left:798px;width:55px">394.98</div>
<div class="c cb r" style="left:853px;width:65px">789.96</div>
<div class="c cb r" style="left:918px;width:55px">0.00</div>
<div class="c cb ce" style="left:973px;width:25px"></div>
<div class="c cb" style="left:998px;width:60px">XML</div>
<div class="c cb" style="left:1058px;width:75px"></div>
</div>
<div class="row" style="top:217px">
<div class="c cb" style="left:0px;width:75px">Orlando Int<span style="letter-spacing:0.9px">...</span></div>
<div class="c cb" style="left:75px;width:120px">The Avanti Resort</div>
<div class="c cb" style="left:195px;width:40px">3.0</div>
<div class="c cb" style="left:235px;width:75px">Room Only</div>
<div class="c cb" style="left:310px;width:90px;letter-spacing:-0.25px">Standard Roo<span style="letter-spacing:0.9px">...</span></div>
<div class="c cb" style="left:400px;width:35px">Wed</div>
<div class="c cb" style="left:435px;width:68px">13/09/2017</div>
<div class="c cb" style="left:503px;width:35px">Wed</div>
<div class="c cb" style="left:538px;width:68px">27/09/2017</div>
<div class="c cb" style="left:606px;width:62px">Get A Bed</div>
<div class="c cb ce" style="left:668px;width:25px"><span style="font-size:14px;position:relative;top:1px">*</span></div>
<div class="c cb ce" style="left:693px;width:25px"></div>
<div class="c cb ce" style="left:718px;width:25px"></div>
<div class="c cb r" style="left:743px;width:55px">815.44</div>
<div class="c cb r" style="left:798px;width:55px">407.72</div>
<div class="c cb r" style="left:853px;width:65px">815.44</div>
<div class="c cb r" style="left:918px;width:55px">0.00</div>
<div class="c cb ce" style="left:973px;width:25px"></div>
<div class="c cb" style="left:998px;width:60px">XML</div>
<div class="c cb" style="left:1058px;width:75px"></div>
</div>
<div class="row" style="top:232px">
<div class="c cb" style="left:0px;width:75px">Internation<span style="letter-spacing:0.9px">...</span></div>
<div class="c cb" style="left:75px;width:120px">Avanti Resort</div>
<div class="c cb" style="left:195px;width:40px">3.5*</div>
<div class="c cb" style="left:235px;width:75px">Roomonly</div>
<div class="c cb" style="left:310px;width:90px;letter-spacing:-0.25px">Superior Doubl<span style="letter-spacing:0.9px">...</span></div>
<div class="c cb" style="left:400px;width:35px">Wed</div>
<div class="c cb" style="left:435px;width:68px">13/09/2017</div>
<div class="c cb" style="left:503px;width:35px">Wed</div>
<div class="c cb" style="left:538px;width:68px">27/09/2017</div>
<div class="c cb" style="left:606px;width:62px">Tourico <span style="letter-spacing:0.9px">...</span></div>
<div class="c cb ce" style="left:668px;width:25px"></div>
<div class="c cb ce" style="left:693px;width:25px"></div>
<div class="c cb ce" style="left:718px;width:25px"></div>
<div class="c cb r" style="left:743px;width:55px">2,375.13</div>
<div class="c cb r" style="left:798px;width:55px">1,187.57</div>
<div class="c cb r" style="left:853px;width:65px">2,375.13</div>
<div class="c cb r" style="left:918px;width:55px">0.00</div>
<div class="c cb ce" style="left:973px;width:25px"></div>
<div class="c cb" style="left:998px;width:60px">XML</div>
<div class="c cb" style="left:1058px;width:75px"></div>
</div>
<div class="row" style="top:247px">
<div class="c cb" style="left:0px;width:75px">Internation<span style="letter-spacing:0.9px">...</span></div>
<div class="c cb" style="left:75px;width:120px">Avanti Resort</div>
<div class="c cb" style="left:195px;width:40px">3.5*</div>
<div class="c cb" style="left:235px;width:75px">Roomonly</div>
<div class="c cb" style="left:310px;width:90px;letter-spacing:-0.25px">Superior King</div>
<div class="c cb" style="left:400px;width:35px">Wed</div>
<div class="c cb" style="left:435px;width:68px">13/09/2017</div>
<div class="c cb" style="left:503px;width:35px">Wed</div>
<div class="c cb" style="left:538px;width:68px">27/09/2017</div>
<div class="c cb" style="left:606px;width:62px">Tourico <span style="letter-spacing:0.9px">...</span></div>
<div class="c cb ce" style="left:668px;width:25px"></div>
<div class="c cb ce" style="left:693px;width:25px"></div>
<div class="c cb ce" style="left:718px;width:25px"></div>
<div class="c cb r" style="left:743px;width:55px">2,375.13</div>
<div class="c cb r" style="left:798px;width:55px">1,187.57</div>
<div class="c cb r" style="left:853px;width:65px">2,375.13</div>
<div class="c cb r" style="left:918px;width:55px">0.00</div>
<div class="c cb ce" style="left:973px;width:25px"></div>
<div class="c cb" style="left:998px;width:60px">XML</div>
<div class="c cb" style="left:1058px;width:75px"></div>
</div>
<div class="row" style="top:262px">
<div class="c cb" style="left:0px;width:75px">Internation<span style="letter-spacing:0.9px">...</span></div>
<div class="c cb" style="left:75px;width:120px">Avanti Resort</div>
<div class="c cb" style="left:195px;width:40px">3.5*</div>
<div class="c cb" style="left:235px;width:75px">Roomonly</div>
<div class="c cb" style="left:310px;width:90px;letter-spacing:-0.25px">Premium King S<span style="letter-spacing:0.9px">...</span></div>
<div class="c cb" style="left:400px;width:35px">Wed</div>
<div class="c cb" style="left:435px;width:68px">13/09/2017</div>
<div class="c cb" style="left:503px;width:35px">Wed</div>
<div class="c cb" style="left:538px;width:68px">27/09/2017</div>
<div class="c cb" style="left:606px;width:62px">Tourico <span style="letter-spacing:0.9px">...</span></div>
<div class="c cb ce" style="left:668px;width:25px"></div>
<div class="c cb ce" style="left:693px;width:25px"></div>
<div class="c cb ce" style="left:718px;width:25px"></div>
<div class="c cb r" style="left:743px;width:55px">2,559.46</div>
<div class="c cb r" style="left:798px;width:55px">1,279.73</div>
<div class="c cb r" style="left:853px;width:65px">2,559.46</div>
<div class="c cb r" style="left:918px;width:55px">0.00</div>
<div class="c cb ce" style="left:973px;width:25px"></div>
<div class="c cb" style="left:998px;width:60px">XML</div>
<div class="c cb" style="left:1058px;width:75px"></div>
</div>
<div class="row" style="top:277px">
<div class="c cb" style="left:0px;width:75px">Orlando Int<span style="letter-spacing:0.9px">...</span></div>
<div class="c cb" style="left:75px;width:120px">The Avanti Resort</div>
<div class="c cb" style="left:195px;width:40px">3.0</div>
<div class="c cb" style="left:235px;width:75px">Room Only</div>
<div class="c cb" style="left:310px;width:90px;letter-spacing:-0.25px">Deluxe Double <span style="letter-spacing:0.9px">...</span></div>
<div class="c cb" style="left:400px;width:35px">Wed</div>
<div class="c cb" style="left:435px;width:68px">13/09/2017</div>
<div class="c cb" style="left:503px;width:35px">Wed</div>
<div class="c cb" style="left:538px;width:68px">27/09/2017</div>
<div class="c cb" style="left:606px;width:62px">Get A Bed</div>
<div class="c cb ce" style="left:668px;width:25px"><span style="font-size:14px;position:relative;top:1px">*</span></div>
<div class="c cb ce" style="left:693px;width:25px"></div>
<div class="c cb ce" style="left:718px;width:25px"></div>
<div class="c cb r" style="left:743px;width:55px">11,239<span style="letter-spacing:0.9px">...</span></div>
<div class="c cb r" style="left:798px;width:55px">5,619.66</div>
<div class="c cb r" style="left:853px;width:65px">11,239.32</div>
<div class="c cb r" style="left:918px;width:55px">0.00</div>
<div class="c cb ce" style="left:973px;width:25px"></div>
<div class="c cb" style="left:998px;width:60px">XML</div>
<div class="c cb" style="left:1058px;width:75px"></div>
</div>
<div class="row" style="top:292px">
<div class="c cb" style="left:0px;width:75px">Orlando Int<span style="letter-spacing:0.9px">...</span></div>
<div class="c cb" style="left:75px;width:120px">The Avanti Resort</div>
<div class="c cb" style="left:195px;width:40px">3.0</div>
<div class="c cb" style="left:235px;width:75px">Room Only</div>
<div class="c cb" style="left:310px;width:90px;letter-spacing:-0.25px">Premium King S<span style="letter-spacing:0.9px">...</span></div>
<div class="c cb" style="left:400px;width:35px">Wed</div>
<div class="c cb" style="left:435px;width:68px">13/09/2017</div>
<div class="c cb" style="left:503px;width:35px">Wed</div>
<div class="c cb" style="left:538px;width:68px">27/09/2017</div>
<div class="c cb" style="left:606px;width:62px">Get A Bed</div>
<div class="c cb ce" style="left:668px;width:25px"><span style="font-size:14px;position:relative;top:1px">*</span></div>
<div class="c cb ce" style="left:693px;width:25px"></div>
<div class="c cb ce" style="left:718px;width:25px"></div>
<div class="c cb r" style="left:743px;width:55px">11,239<span style="letter-spacing:0.9px">...</span></div>
<div class="c cb r" style="left:798px;width:55px">5,619.66</div>
<div class="c cb r" style="left:853px;width:65px">11,239.32</div>
<div class="c cb r" style="left:918px;width:55px">0.00</div>
<div class="c cb ce" style="left:973px;width:25px"></div>
<div class="c cb" style="left:998px;width:60px">XML</div>
<div class="c cb" style="left:1058px;width:75px"></div>
</div>
<div class="row" style="top:307px">
<div class="c cb" style="left:0px;width:75px">Orlando Int<span style="letter-spacing:0.9px">...</span></div>
<div class="c cb" style="left:75px;width:120px">The Avanti Resort</div>
<div class="c cb" style="left:195px;width:40px">3.0</div>
<div class="c cb" style="left:235px;width:75px">Room Only</div>
<div class="c cb" style="left:310px;width:90px;letter-spacing:-0.25px">Superior Doubl<span style="letter-spacing:0.9px">...</span></div>
<div class="c cb" style="left:400px;width:35px">Wed</div>
<div class="c cb" style="left:435px;width:68px">13/09/2017</div>
<div class="c cb" style="left:503px;width:35px">Wed</div>
<div class="c cb" style="left:538px;width:68px">27/09/2017</div>
<div class="c cb" style="left:606px;width:62px">Get A Bed</div>
<div class="c cb ce" style="left:668px;width:25px"><span style="font-size:14px;position:relative;top:1px">*</span></div>
<div class="c cb ce" style="left:693px;width:25px"></div>
<div class="c cb ce" style="left:718px;width:25px"></div>
<div class="c cb r" style="left:743px;width:55px">11,239<span style="letter-spacing:0.9px">...</span></div>
<div class="c cb r" style="left:798px;width:55px">5,619.66</div>
<div class="c cb r" style="left:853px;width:65px">11,239.32</div>
<div class="c cb r" style="left:918px;width:55px">0.00</div>
<div class="c cb ce" style="left:973px;width:25px"></div>
<div class="c cb" style="left:998px;width:60px">XML</div>
<div class="c cb" style="left:1058px;width:75px"></div>
</div>
<div class="row" style="top:322px">
<div class="c cb" style="left:0px;width:75px">Orlando Int<span style="letter-spacing:0.9px">...</span></div>
<div class="c cb" style="left:75px;width:120px">The Avanti Resort</div>
<div class="c cb" style="left:195px;width:40px">3.0</div>
<div class="c cb" style="left:235px;width:75px">Room Only</div>
<div class="c cb" style="left:310px;width:90px;letter-spacing:-0.25px">Superior King <span style="letter-spacing:0.9px">...</span></div>
<div class="c cb" style="left:400px;width:35px">Wed</div>
<div class="c cb" style="left:435px;width:68px">13/09/2017</div>
<div class="c cb" style="left:503px;width:35px">Wed</div>
<div class="c cb" style="left:538px;width:68px">27/09/2017</div>
<div class="c cb" style="left:606px;width:62px">Get A Bed</div>
<div class="c cb ce" style="left:668px;width:25px"><span style="font-size:14px;position:relative;top:1px">*</span></div>
<div class="c cb ce" style="left:693px;width:25px"></div>
<div class="c cb ce" style="left:718px;width:25px"></div>
<div class="c cb r" style="left:743px;width:55px">11,239<span style="letter-spacing:0.9px">...</span></div>
<div class="c cb r" style="left:798px;width:55px">5,619.66</div>
<div class="c cb r" style="left:853px;width:65px">11,239.32</div>
<div class="c cb r" style="left:918px;width:55px">0.00</div>
<div class="c cb ce" style="left:973px;width:25px"></div>
<div class="c cb" style="left:998px;width:60px">XML</div>
<div class="c cb" style="left:1058px;width:75px"></div>
</div>
<div class="t" style="left:222px;top:782px">First portion: 6.8 sec, total search time: 39.5 sec</div>
<div class="a" style="left:1560px;top:778px;width:23px;height:22px;background:#d4d0c8;border-top:1px solid #fff;border-left:1px solid #fff;border-right:1px solid #404040;border-bottom:1px solid #404040;box-shadow:inset -1px -1px 0 #808080"></div>
<svg class="a" style="left:1568px;top:783px" width="6" height="12" viewBox="0 0 6 12"><rect x="1.6" y="0" width="2.6" height="2.4" rx="0.6" fill="#0848a8"/><path d="M0.4 4.2 H4.2 V10.6 H5.6 V12 H0.2 V10.6 H1.5 V5.6 H0.4Z" fill="#0848a8"/></svg>
<div class="a" style="left:215px;top:805px;width:1378px;height:1px;background:#808080"></div>
<div class="a" style="left:215px;top:806px;width:52px;height:17px;border-right:1px solid #808080"></div>
<div class="t" style="left:218px;top:807px;color:#000;letter-spacing:-0.4px">Summary</div>
<div class="a" style="left:268px;top:806px;width:40px;height:17px;border-right:1px solid #808080"></div>
<div class="t" style="left:271px;top:807px;color:#000;letter-spacing:-0.4px">Search</div>
<div class="a" style="left:309px;top:805px;width:65px;height:18px;background:#0a840a;border-radius:3px"></div>
<div class="t" style="left:312px;top:807px;color:#fff;letter-spacing:-0.4px">Acc 2A MCO</div>
<div class="a" style="left:374px;top:806px;width:52px;height:17px;background:#ccffc4;border-right:1px solid #808080"></div>
<div class="t" style="left:379px;top:807px;color:#000;letter-spacing:-0.4px">Car MCO</div>
<div class="a" style="left:426px;top:806px;width:64px;height:17px;background:#c0c0ff;border-right:1px solid #808080"></div>
<div class="t" style="left:430px;top:807px;color:#000;letter-spacing:-0.4px">Trf 2A MCO</div>
<div class="a" style="left:490px;top:806px;width:95px;height:17px;border-right:1px solid #808080"></div>
<div class="t" style="left:493px;top:807px;color:#000;letter-spacing:-0.4px">Financial Summary</div>
<div class="t" style="left:806px;top:831px;letter-spacing:-0.2px">User: 446 - Clark Silk</div>
<div class="t" style="left:916px;top:831px;letter-spacing:-0.1px">Retailer: 'Ocean-Florida'</div>
<div class="t" style="left:1043px;top:831px;letter-spacing:-0.1px">Client: none</div>
<div class="t" style="left:1541px;top:831px;letter-spacing:-0.5px">18:47 GMT</div>
<div class="a" style="left:0;top:858px;width:1600px;height:2px;background:#404040"></div>
</body></html>
